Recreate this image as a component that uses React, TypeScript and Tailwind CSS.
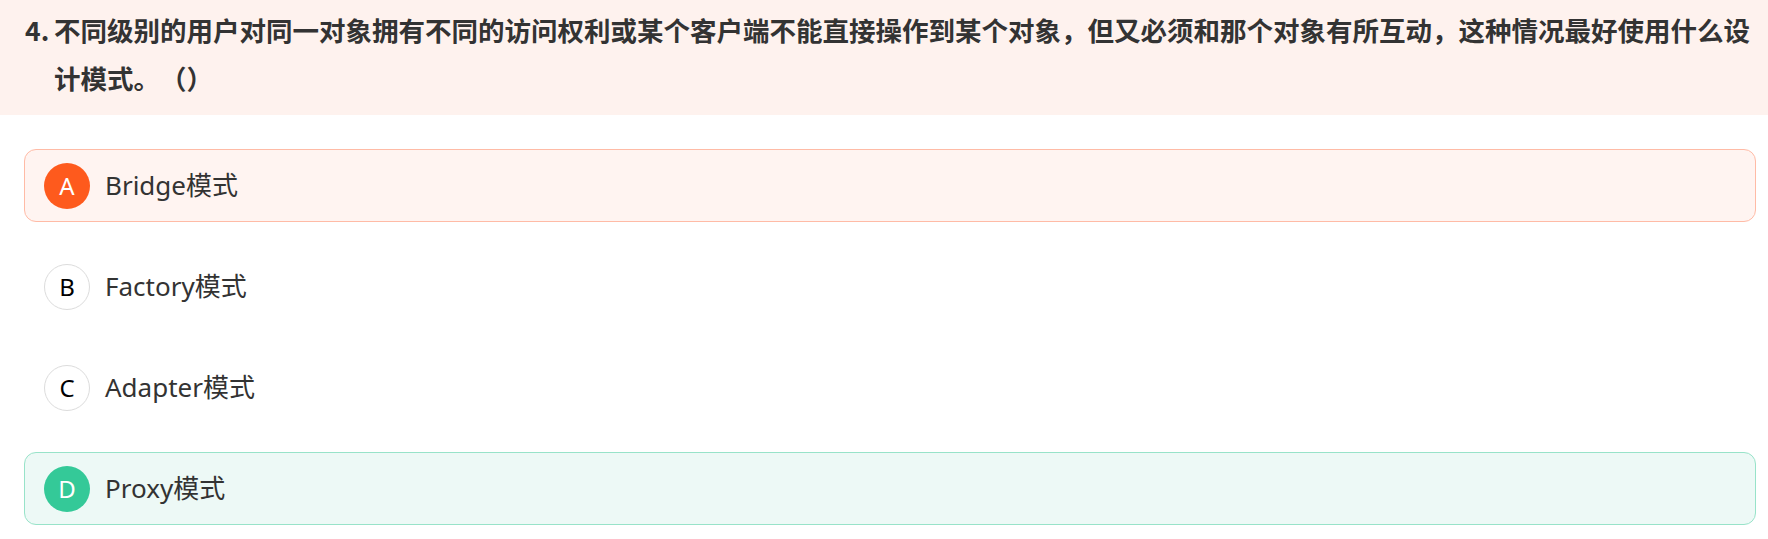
const options = [
  { key: 'A', text: 'Bridge模式', state: 'wrong' },
  { key: 'B', text: 'Factory模式', state: 'none' },
  { key: 'C', text: 'Adapter模式', state: 'none' },
  { key: 'D', text: 'Proxy模式', state: 'right' },
];

const App = () => {
  return (
    <div className="min-h-[539px] bg-white text-[#333333] font-['Noto_Sans','Noto_Sans_CJK_SC',sans-serif]">
      {/* Question stem */}
      <div className="bg-[#fef2ee] pl-[25px] pr-[2px] pt-[6px] pb-[13px]">
        <div className="flex text-[26.5px] font-bold leading-[48px] [text-spacing-trim:space-all] font-['Noto_Sans_CJK_SC',sans-serif]">
          <span className="w-[29px] shrink-0">4.</span>
          <p>
            不同级别的用户对同一对象拥有不同的访问权利或某个客户端不能直接操作到某个对象，但又必须和那个对象有所互动，这种情况最好使用什么设计模式。（）
          </p>
        </div>
      </div>

      {/* Options */}
      <div className="flex flex-col gap-[28px] pt-[34px] pl-[24px] pr-[12px]">
        {options.map((o) => (
          <div
            key={o.key}
            className={
              'flex h-[73px] items-center gap-[15px] rounded-[12px] border pl-[19px] ' +
              (o.state === 'wrong'
                ? 'border-[#ffbba6] bg-[#fff4f1]'
                : o.state === 'right'
                  ? 'border-[#98e3c9] bg-[#edf9f6]'
                  : 'border-transparent bg-white')
            }
          >
            <div
              className={
                'flex h-[46px] w-[46px] items-center justify-center rounded-full text-[24px] ' +
                (o.state === 'wrong'
                  ? 'bg-[#fe5a1d] text-white'
                  : o.state === 'right'
                    ? 'bg-[#34c998] text-white'
                    : 'border border-[#dcdcdc] bg-white text-black')
              }
            >
              {o.key}
            </div>
            <span className="text-[26px]">{o.text}</span>
          </div>
        ))}
      </div>
    </div>
  );
};

export default App;
